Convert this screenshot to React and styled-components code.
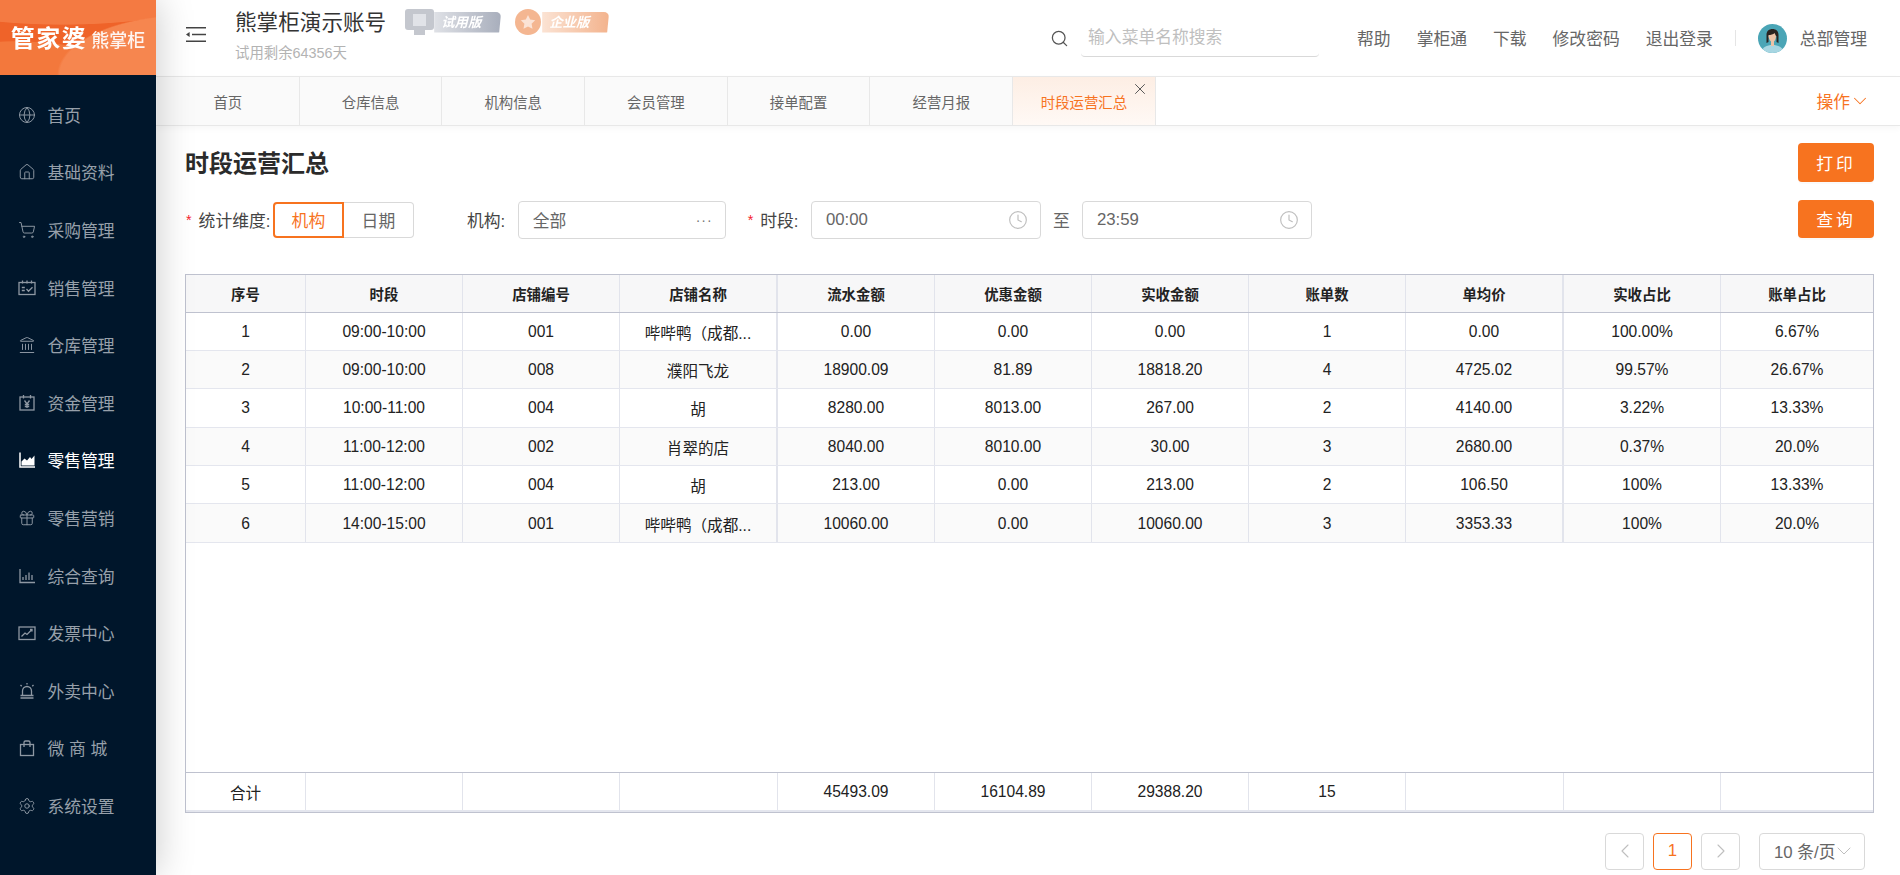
import React from 'react';
import styled, {createGlobalStyle} from 'styled-components';
import {Globe, House, ShoppingCart, Landmark, Gift, Settings, Search, Clock, ChevronDown, ChevronLeft, ChevronRight, X} from 'lucide-react';

const FONT = '"Liberation Sans", "Noto Sans CJK SC", sans-serif';
const ORANGE = '#f7731f';
const COLS = '120px 157px 157px 158px 157px 157px 157px 157px 158px 157px 1fr';

const GlobalStyle = createGlobalStyle`
html, body {
    margin: 0;
    height: 100%;
    background: #fff;
    font-family: ${FONT};
}
* {
    box-sizing: border-box;
}
`;

const Page = styled.div`
display: flex;
width: 100%;
height: 100vh;
overflow: hidden;
`;

const Sidebar = styled.aside`
position: relative;
z-index: 2;
flex: 0 0 156px;
background: #00162b;
box-shadow: 0 0 36px rgba(0, 0, 0, .22);
`;

const Logo = styled.div`
display: flex;
align-items: baseline;
justify-content: center;
height: 75px;
padding-top: 19px;
color: #fff;
font-weight: 700;
background:
    radial-gradient(ellipse 130px 60px at 120% 100%, #f6864f 0 98%, transparent 100%),
    radial-gradient(ellipse 110px 34px at 10% 100%, #f3783c 0 98%, transparent 100%),
    radial-gradient(ellipse 170px 40px at 40% -20%, #f47a42 0 98%, transparent 100%),
    #ef6329;
`;

const LogoMain = styled.span`
font-size: 24px;
letter-spacing: 1.5px;
filter: blur(.4px);
`;

const LogoSub = styled.span`
margin-left: 4px;
font-size: 18px;
font-weight: 500;
filter: blur(.4px);
opacity: .92;
`;

const Menu = styled.nav`
display: flex;
flex-direction: column;
padding-top: 11px;
`;

const MenuItem = styled.a`
display: flex;
align-items: center;
height: 57.6px;
padding-left: 18px;
color: ${p => p.$active ? '#fff' : '#97a0aa'};
font-size: 16.8px;
svg {
    flex: 0 0 18px;
    width: 18px;
    height: 18px;
    margin-right: 11.5px;
    color: ${p => p.$active ? '#fff' : '#8e98a3'};
}
`;

const Main = styled.main`
flex: 1;
display: flex;
flex-direction: column;
min-width: 0;
`;

const Header = styled.header`
display: flex;
align-items: center;
flex: 0 0 76px;
padding: 0 33px 0 30px;
`;

const FoldButton = styled.span`
display: flex;
margin-top: -8px;
color: #444;
`;

const Account = styled.div`
margin-left: 29px;
margin-top: -5px;
`;

const AccountName = styled.div`
color: #333;
font-size: 21.6px;
line-height: 28px;
`;

const AccountHint = styled.div`
margin-top: 7px;
color: #b3b3b3;
font-size: 14.4px;
line-height: 18px;
`;

const Badges = styled.div`
display: flex;
gap: 12px;
align-self: flex-start;
margin: 9px 0 0 19px;
filter: blur(.5px);
`;

const Badge = styled.div`
display: flex;
align-items: center;
width: 96px;
height: 26px;
`;

const BadgeIcon = styled.span`
display: flex;
align-items: center;
justify-content: center;
flex: 0 0 29px;
height: 26px;
svg {
    display: block;
}
`;

const BadgeBar = styled.span`
flex: 1;
height: 21px;
padding-left: 7px;
border-radius: 0 5px 3px 0;
color: #fff;
font-size: 13.4px;
font-weight: 700;
font-style: italic;
line-height: 21px;
background: linear-gradient(90deg, ${p => p.$from}, ${p => p.$to});
clip-path: polygon(0 0, 100% 0, 97% 100%, 0 100%);
`;

const SearchIcon = styled(Search)`
margin-left: auto;
width: 19px;
height: 19px;
color: #555;
`;

const SearchInput = styled.input`
width: 238px;
height: 38px;
margin: 0 38px 0 12px;
padding: 0 0 0 7px;
border: 0;
border-bottom: 1px solid #d9d9d9;
border-radius: 4px;
outline: none;
color: #666;
font-family: ${FONT};
font-size: 16.8px;
&::placeholder {
    color: #bfbfbf;
}
`;

const HeaderLinks = styled.div`
display: flex;
gap: 26px;
color: #666;
font-size: 16.8px;
`;

const Divider = styled.span`
width: 1px;
height: 16px;
margin: 0 22px;
background: #e5e5e5;
`;

const UserName = styled.span`
margin-left: 13px;
color: #666;
font-size: 16.8px;
`;

const Tabs = styled.div`
display: flex;
flex: 0 0 50px;
padding-left: 1px;
border-top: 1px solid #e8e8e8;
border-bottom: 1px solid #e8e8e8;
box-shadow: 0 3px 6px rgba(0, 0, 0, .03);
`;

const Tab = styled.div`
position: relative;
display: flex;
align-items: center;
justify-content: center;
width: 142.7px;
border-right: 1px solid #e8e8e8;
color: ${p => p.$active ? ORANGE : '#666'};
font-size: 14.4px;
background: ${p => p.$active ? 'linear-gradient(180deg, #fdeee4, #fff9f5)' : '#fafafa'};
`;

const TabClose = styled(X)`
position: absolute;
top: 3px;
right: 6px;
width: 18px;
height: 18px;
color: #555;
`;

const TabActions = styled.div`
display: flex;
align-items: center;
margin-left: auto;
padding-right: 29px;
color: ${ORANGE};
font-size: 16.8px;
svg {
    margin-left: -1px;
}
`;

const Content = styled.section`
flex: 1;
display: flex;
flex-direction: column;
min-height: 0;
padding: 17px 26px 6px 29px;
`;

const TitleRow = styled.div`
display: flex;
align-items: center;
justify-content: space-between;
`;

const Title = styled.h1`
margin: 0;
padding-top: 2px;
color: #2b2b2b;
font-size: 24px;
font-weight: 700;
line-height: 37px;
`;

const FormRow = styled.div`
display: flex;
align-items: center;
margin-top: 19px;
`;

const Label = styled.label`
display: flex;
align-items: center;
color: #444;
font-size: 16.8px;
white-space: nowrap;
margin-left: ${p => p.$gap || 0}px;
margin-right: ${p => p.$after || 0}px;
`;

const Star = styled.span`
margin: 0 7px 0 1px;
color: #f5222d;
font-size: 14.4px;
`;

const Segment = styled.div`
display: flex;
height: 36px;
`;

const SegmentItem = styled.span`
display: flex;
align-items: center;
justify-content: center;
width: ${p => p.$active ? 71 : 70}px;
border: ${p => p.$active ? `2px solid ${ORANGE}` : '1px solid #d9d9d9'};
border-left-width: ${p => p.$active ? 2 : 0}px;
border-radius: ${p => p.$active ? '4px 0 0 4px' : '0 4px 4px 0'};
color: ${p => p.$active ? ORANGE : '#666'};
font-size: 16.8px;
`;

const Field = styled.div`
display: flex;
align-items: center;
justify-content: space-between;
width: ${p => p.$width}px;
height: 38px;
padding: 0 12px 0 14px;
border: 1px solid #d9d9d9;
border-radius: 4px;
color: #666;
font-size: 16.8px;
`;

const FieldDots = styled.span`
color: #777;
font-size: 14px;
letter-spacing: 1px;
`;

const ClockIcon = styled(Clock)`
width: 20px;
height: 20px;
color: #bfbfbf;
`;

const To = styled.span`
width: 41px;
color: #666;
font-size: 16.8px;
text-align: center;
`;

const OrangeButton = styled.button.attrs({type: 'button'})`
width: 76px;
height: 38.5px;
padding: 0;
border: 0;
border-radius: 4px;
color: #fff;
font-family: ${FONT};
font-size: 16.8px;
letter-spacing: 3px;
background: ${ORANGE};
box-shadow: 0 2px 0 rgba(0, 0, 0, .02);
`;

const PushRight = styled(OrangeButton)`
margin-left: auto;
margin-top: -2px;
`;

const Table = styled.div`
flex: 0 0 539px;
display: flex;
flex-direction: column;
margin-top: 34.5px;
border: 1px solid #bfc2cf;
`;

const Row = styled.div`
display: grid;
grid-template-columns: ${COLS};
height: ${p => p.$height}px;
flex: 0 0 auto;
background: ${p => p.$bg || '#fff'};
border-bottom: 1px solid ${p => p.$line || '#e4e6ee'};
`;

const TableBody = styled.div`
flex: 1;
min-height: 0;
`;

const Cell = styled.div`
display: flex;
align-items: center;
justify-content: center;
min-width: 0;
padding: 1px 6px 0;
border-right: ${p => p.$thick ? 2 : 1}px solid #e2e4ec;
color: #222;
font-size: 15.6px;
white-space: nowrap;
&:last-child {
    border-right: 0;
}
`;

const HeadCell = styled(Cell)`
padding-top: 0;
font-size: 14.4px;
font-weight: 700;
`;

const FooterRow = styled(Row)`
margin-top: auto;
border-top: 1px solid #bfc2cf;
border-bottom: 2px solid #e4e6ee;
`;

const Pagination = styled.div`
display: flex;
align-items: center;
justify-content: flex-end;
gap: 9px;
margin-top: 20px;
padding-right: 9px;
`;

const PageButton = styled.span`
display: flex;
align-items: center;
justify-content: center;
width: 39px;
height: 37px;
border: 1px solid ${p => p.$active ? ORANGE : '#d9d9d9'};
border-radius: 4px;
color: ${p => p.$active ? ORANGE : '#bfbfbf'};
font-size: 16.8px;
`;

const PageSize = styled.span`
display: flex;
align-items: center;
width: 106px;
height: 37px;
margin-left: 10px;
padding-left: 14px;
border: 1px solid #d9d9d9;
border-radius: 4px;
color: #666;
font-size: 16.8px;
white-space: nowrap;
svg {
    flex: 0 0 24px;
    margin-left: -4px;
    color: #bfbfbf;
}
`;

const line = {fill: 'none', stroke: 'currentColor', strokeWidth: 1.3};

const CalendarCheck = () => (
    <svg viewBox="0 0 18 18" {...line}>
        <rect x="1" y="3.5" width="16" height="12" />
        <path d="M4.500 1.500v3M9 1.500v3M13.500 1.500v3M3.800 8.500h3M3.800 11.500h3M8.500 10l2 2.200 4-4" />
    </svg>
);

const CalendarYen = () => (
    <svg viewBox="0 0 18 18" {...line}>
        <rect x="2" y="3" width="14" height="13" />
        <path d="M5.500 1v3.500M12.500 1v3.500M6.500 6.500 9 10l2.500-3.500M9 10v4M6.800 10.500h4.400M6.800 12.500h4.400" />
    </svg>
);

const AreaChart = () => (
    <svg viewBox="0 0 18 18">
        <path d="M2 1.500v14.500h15" fill="none" stroke="currentColor" strokeWidth="1.500" />
        <path d="M3.500 14.500v-4l3-3 2.500 2 3-3.500 1.500 2 3-3.500v10z" fill="currentColor" />
    </svg>
);

const BarsChart = () => (
    <svg viewBox="0 0 18 18" {...line}>
        <path d="M2 2v13.500h15M5 13v-3M8 13V8M11 13V5.500M14 13V8" />
    </svg>
);

const LineBox = () => (
    <svg viewBox="0 0 18 18" {...line}>
        <rect x="1" y="3" width="16" height="12.500" />
        <path d="M3.500 12.500 7 9l2 1.500 5-5M12 5.500h2v2" />
    </svg>
);

const Alarm = () => (
    <svg viewBox="0 0 18 18" {...line}>
        <path d="M4.500 13.500V9a4.500 4.500 0 0 1 9 0v4.500M2.500 13.500h13M2.500 16h13M9 1v1.500M2.500 3l1.200 1.200M15.500 3l-1.200 1.200" />
    </svg>
);

const Bag = () => (
    <svg viewBox="0 0 18 18" {...line}>
        <rect x="2.500" y="5.500" width="13" height="11" />
        <path d="M6 8V3.500a1.500 1.500 0 0 1 1.500-1.500h3A1.500 1.500 0 0 1 12 3.500V8" />
    </svg>
);

const Fold = () => (
    <svg width="20" height="17" viewBox="0 0 20 17">
        <path d="M0 1h20v1.500H0zM0 14.500h20V16H0zM6 7.700h14v1.500H6z" fill="currentColor" />
        <path d="M0 8.500 3.600 6v5z" fill="currentColor" />
    </svg>
);

const Monitor = () => (
    <svg width="29" height="26" viewBox="0 0 29 26">
        <rect x="0" y="0" width="29" height="21" rx="3" fill="#c4c7ce" />
        <rect x="8" y="5" width="13" height="12" fill="#e1e3e8" />
        <rect x="9" y="21" width="11" height="5" fill="#c4c7ce" />
    </svg>
);

const StarDisc = () => (
    <svg width="26" height="26" viewBox="0 0 26 26">
        <circle cx="13" cy="13" r="13" fill="#f4b691" />
        <path d="m13 6 2.200 4.600 5 .7-3.600 3.500.9 5-4.500-2.400-4.500 2.400.9-5-3.600-3.500 5-.7z" fill="#fbe3d6" />
    </svg>
);

const Avatar = () => (
    <svg width="29" height="29" viewBox="0 0 29 29">
        <clipPath id="avatar-clip"><circle cx="14.500" cy="14.500" r="14.500" /></clipPath>
        <g clipPath="url(#avatar-clip)">
            <rect width="29" height="29" fill="#4aa5b6" />
            <path d="M3 29c1-6 6-8 11.500-8S25 23 26 29z" fill="#a7d6e2" />
            <path d="M8.500 19V11c0-4 2.500-6 6-6s6 2 6 6v8l-2-1v-6h-8v6z" fill="#2b2320" />
            <path d="M10.500 11c2 0 5-.5 6-2l1.500 3c0 3-1.500 6-3.500 6s-4-3-4-7z" fill="#eec2a6" />
            <rect x="13" y="17" width="3" height="5" fill="#eec2a6" />
        </g>
    </svg>
);

const MENUS = [
    {name: '首页', icon: <Globe strokeWidth={1.3} />},
    {name: '基础资料', icon: <House strokeWidth={1.3} />},
    {name: '采购管理', icon: <ShoppingCart strokeWidth={1.3} />},
    {name: '销售管理', icon: <CalendarCheck />},
    {name: '仓库管理', icon: <Landmark strokeWidth={1.3} />},
    {name: '资金管理', icon: <CalendarYen />},
    {name: '零售管理', icon: <AreaChart />, active: true},
    {name: '零售营销', icon: <Gift strokeWidth={1.3} />},
    {name: '综合查询', icon: <BarsChart />},
    {name: '发票中心', icon: <LineBox />},
    {name: '外卖中心', icon: <Alarm />},
    {name: '微 商 城', icon: <Bag />},
    {name: '系统设置', icon: <Settings strokeWidth={1.3} />},
];

const TABS = ['首页', '仓库信息', '机构信息', '会员管理', '接单配置', '经营月报', '时段运营汇总'];

const HEADS = ['序号', '时段', '店铺编号', '店铺名称', '流水金额', '优惠金额', '实收金额', '账单数', '单均价', '实收占比', '账单占比'];

const ROWS = [
    ['1', '09:00-10:00', '001', '哔哔鸭（成都...', '0.00', '0.00', '0.00', '1', '0.00', '100.00%', '6.67%'],
    ['2', '09:00-10:00', '008', '濮阳飞龙', '18900.09', '81.89', '18818.20', '4', '4725.02', '99.57%', '26.67%'],
    ['3', '10:00-11:00', '004', '胡', '8280.00', '8013.00', '267.00', '2', '4140.00', '3.22%', '13.33%'],
    ['4', '11:00-12:00', '002', '肖翠的店', '8040.00', '8010.00', '30.00', '3', '2680.00', '0.37%', '20.0%'],
    ['5', '11:00-12:00', '004', '胡', '213.00', '0.00', '213.00', '2', '106.50', '100%', '13.33%'],
    ['6', '14:00-15:00', '001', '哔哔鸭（成都...', '10060.00', '0.00', '10060.00', '3', '3353.33', '100%', '20.0%'],
];

const TOTALS = ['合计', '', '', '', '45493.09', '16104.89', '29388.20', '15', '', '', ''];

const isThick = i => i === 3 || i === 8;

export default function App() {
    return (
        <Page>
            <GlobalStyle />
            <Sidebar>
                <Logo>
                    <LogoMain>管家婆</LogoMain>
                    <LogoSub>熊掌柜</LogoSub>
                </Logo>
                <Menu>
                    {MENUS.map(({name, icon, active}) => (
                        <MenuItem key={name} $active={active}>{icon}{name}</MenuItem>
                    ))}
                </Menu>
            </Sidebar>
            <Main>
                <Header>
                    <FoldButton><Fold /></FoldButton>
                    <Account>
                        <AccountName>熊掌柜演示账号</AccountName>
                        <AccountHint>试用剩余64356天</AccountHint>
                    </Account>
                    <Badges>
                        <Badge>
                            <BadgeIcon><Monitor /></BadgeIcon>
                            <BadgeBar $from="#dfe1e6" $to="#a8aebc">试用版</BadgeBar>
                        </Badge>
                        <Badge>
                            <BadgeIcon><StarDisc /></BadgeIcon>
                            <BadgeBar $from="#fbe3d4" $to="#f3b38d">企业版</BadgeBar>
                        </Badge>
                    </Badges>
                    <SearchIcon strokeWidth={1.6} />
                    <SearchInput placeholder="输入菜单名称搜索" />
                    <HeaderLinks>
                        <span>帮助</span>
                        <span>掌柜通</span>
                        <span>下载</span>
                        <span>修改密码</span>
                        <span>退出登录</span>
                    </HeaderLinks>
                    <Divider />
                    <Avatar />
                    <UserName>总部管理</UserName>
                </Header>
                <Tabs>
                    {TABS.map((name, i) => (
                        <Tab key={name} $active={i === TABS.length - 1}>
                            {name}
                            {i === TABS.length - 1 && <TabClose strokeWidth={1.3} />}
                        </Tab>
                    ))}
                    <TabActions>操作<ChevronDown size={22} strokeWidth={1.1} /></TabActions>
                </Tabs>
                <Content>
                    <TitleRow>
                        <Title>时段运营汇总</Title>
                        <OrangeButton>打印</OrangeButton>
                    </TitleRow>
                    <FormRow>
                        <Label $after={2.5}><Star>*</Star>统计维度:</Label>
                        <Segment>
                            <SegmentItem $active>机构</SegmentItem>
                            <SegmentItem>日期</SegmentItem>
                        </Segment>
                        <Label $gap={53} $after={12.5}>机构:</Label>
                        <Field $width={208}>全部<FieldDots>···</FieldDots></Field>
                        <Label $gap={21} $after={12.4}><Star>*</Star>时段:</Label>
                        <Field $width={230}>00:00<ClockIcon strokeWidth={1.4} /></Field>
                        <To>至</To>
                        <Field $width={230}>23:59<ClockIcon strokeWidth={1.4} /></Field>
                        <PushRight>查询</PushRight>
                    </FormRow>
                    <Table>
                        <Row $height={38} $bg="#f7f7f8" $line="#bfc2cf">
                            {HEADS.map((text, i) => <HeadCell key={text} $thick={isThick(i)}>{text}</HeadCell>)}
                        </Row>
                        <TableBody>
                            {ROWS.map((row, r) => (
                                <Row key={r} $height={38.4} $bg={r % 2 ? '#fafafa' : '#fff'}>
                                    {row.map((text, i) => (
                                        <Cell key={i} $thick={isThick(i)}>{text}</Cell>
                                    ))}
                                </Row>
                            ))}
                        </TableBody>
                        <FooterRow $height={40}>
                            {TOTALS.map((text, i) => <Cell key={i}>{text}</Cell>)}
                        </FooterRow>
                    </Table>
                    <Pagination>
                        <PageButton><ChevronLeft size={24} strokeWidth={1.1} /></PageButton>
                        <PageButton $active>1</PageButton>
                        <PageButton><ChevronRight size={24} strokeWidth={1.1} /></PageButton>
                        <PageSize>10 条/页<ChevronDown size={24} strokeWidth={1} /></PageSize>
                    </Pagination>
                </Content>
            </Main>
        </Page>
    );
}
